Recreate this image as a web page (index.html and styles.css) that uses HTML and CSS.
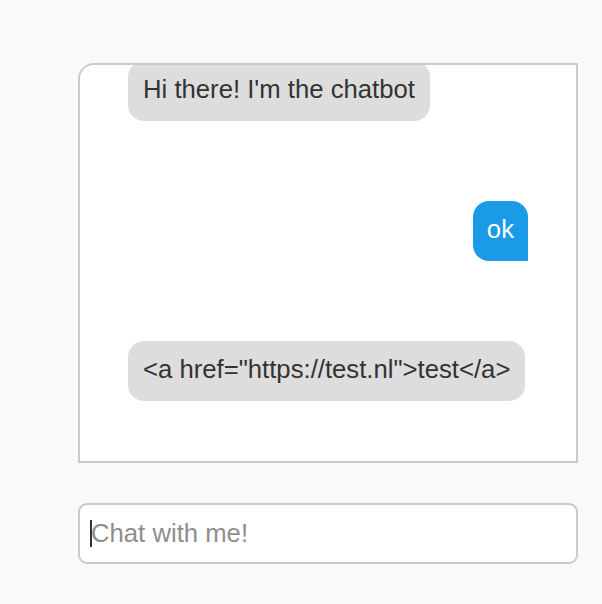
FILE: index.html
```html
<!DOCTYPE html>
<html lang="en">
<head>
    <meta charset="UTF-8">
    <meta name="viewport" content="width=device-width, initial-scale=1.0">
    <title>Chatbot</title>
    <link rel="stylesheet" href="styles.css">
</head>
<body>

    <div id="chat-container">
        <div id="chat-log">
            <div class="message bot">Hi there! I'm the chatbot</div>
            <div class="message user">ok</div>
            <div class="message bot">&lt;a href="https://test.nl"&gt;test&lt;/a&gt;</div>
        </div>
        <label class="input-wrap">
            <input type="text" id="chat-input" placeholder="Chat with me!">
        </label>
    </div>

</body>
</html>
```

FILE: styles.css
```css
body {
    font-family: "Liberation Sans", Arial, Helvetica, sans-serif;
    background-color: #f9f9f9;
    color: #333;
    margin: 0;
    padding: 63px 0 0 78px;
}
#chat-container {
    width: 500px;
}
#chat-log {
    box-sizing: border-box;
    height: 400px;
    background: #fff;
    border: 2px solid #cbcbcb;
    border-radius: 16px 0 0 0;
    padding: 0 48px 60px 48px;
    display: flex;
    flex-direction: column;
    justify-content: flex-end;
    gap: 80px;
    overflow: hidden;
}
.message {
    font-size: 25.7px;
    line-height: 30px;
    padding: 13px 15px 17px;
    border-radius: 16px;
    white-space: nowrap;
    flex-shrink: 0;
}
.bot {
    align-self: flex-start;
    background: #dddddd;
    color: #333;
}
.user {
    align-self: flex-end;
    background: #1b9be7;
    color: white;
    padding-left: 14px;
    padding-right: 14px;
    border-bottom-right-radius: 0;
}
.input-wrap {
    display: block;
    position: relative;
    margin-top: 40px;
}
.input-wrap::before {
    content: "";
    position: absolute;
    left: 12px;
    top: 17px;
    width: 2px;
    height: 27px;
    background: #333;
}
#chat-input {
    box-sizing: border-box;
    display: block;
    width: 100%;
    height: 61px;
    padding: 0 11px;
    font-family: inherit;
    font-size: 25.7px;
    color: #333;
    background: #fff;
    border: 2px solid #cbcbcb;
    border-radius: 9px;
    outline: none;
}
#chat-input::placeholder {
    color: #8e8e8e;
}
```
